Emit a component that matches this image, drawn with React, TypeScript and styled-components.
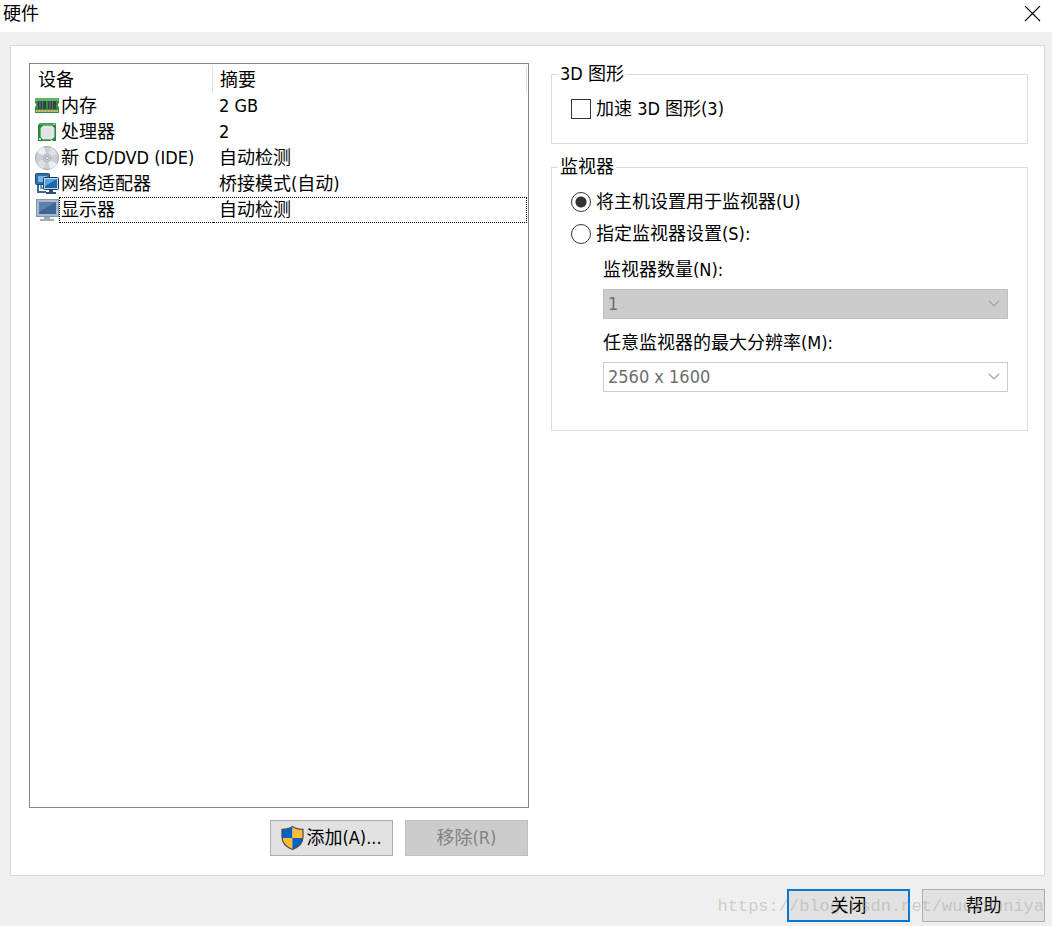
import React from "react";
import styled, { createGlobalStyle, css } from "styled-components";

const Global = createGlobalStyle`
  *, *::before, *::after { box-sizing: border-box; }
  body { margin: 0; background: #efefef; }
  body, button, input, select {
    font-family: "DejaVu Sans Condensed", "Noto Sans CJK SC", sans-serif;
    font-size: 18px;
    line-height: 26px;
    color: #000;
  }
`;

const Dialog = styled.div`
  min-height: 100vh;
  display: flex;
  flex-direction: column;
  background: #efefef;
`;

const TitleBar = styled.header`
  height: 32px;
  flex: none;
  display: flex;
  align-items: center;
  justify-content: space-between;
  padding: 0 11px 4px 3px;
  background: #fff;
`;

const Title = styled.h1`
  margin: 0;
  font-size: 18px;
  font-weight: 400;
`;

const CloseIconButton = styled.button`
  display: flex;
  padding: 0;
  border: 0;
  background: none;
`;

const Panel = styled.main`
  flex: 1;
  display: flex;
  gap: 22px;
  margin: 13px 7px 0 10px;
  padding: 17px 16px 19px 18px;
  border: 1px solid #d9d9d9;
  background: #fff;
`;

const DeviceColumn = styled.section`
  flex: 500 1 0;
  min-width: 0;
  display: flex;
  flex-direction: column;
  gap: 12px;
`;

const SettingsColumn = styled.section`
  flex: 477 1 0;
  min-width: 0;
`;

const DeviceBox = styled.div`
  flex: 1;
  border: 1px solid #828790;
  padding: 2px 1px;
`;

const DeviceTable = styled.table`
  width: 100%;
  border-collapse: separate;
  border-spacing: 0;
  table-layout: fixed;
`;

const HeadCell = styled.th<{ $width?: string }>`
  width: ${(p) => p.$width ?? "auto"};
  height: 27px;
  padding: 0 7px;
  border-right: 1px solid #e0e0e0;
  text-align: left;
  font-weight: 400;
`;

const Cell = styled.td`
  height: 26px;
  padding: 0;
  white-space: nowrap;
`;

const Device = styled.div`
  display: flex;
  height: 26px;
  padding-left: 4px;
`;

const DeviceName = styled.span<{ $focused?: boolean }>`
  flex: 1;
  padding-left: 2px;
  ${(p) => p.$focused && css`border: 1px dotted #000; border-right: 0; padding-left: 1px; line-height: 24px;`}
`;

const Summary = styled.div<{ $focused?: boolean }>`
  height: 26px;
  padding-left: 6px;
  ${(p) => p.$focused && css`border: 1px dotted #000; border-left: 0; line-height: 24px;`}
`;

const ListActions = styled.div`
  display: flex;
  justify-content: flex-end;
  gap: 12px;
  padding-right: 1px;
`;

const PushButton = styled.button<{ $height: number; $primary?: boolean }>`
  width: 123px;
  height: ${(p) => p.$height}px;
  display: flex;
  align-items: center;
  justify-content: center;
  gap: 2px;
  padding: 0;
  background: #e1e1e1;
  border: ${(p) => (p.$primary ? "2px solid #0078d7" : "1px solid #adadad")};
  white-space: nowrap;
  &:disabled {
    background: #ccc;
    border-color: #bfbfbf;
    color: #838383;
  }
`;

const Group = styled.fieldset<{ $height: number }>`
  min-width: 0;
  min-height: ${(p) => p.$height}px;
  margin: 0 0 12px;
  padding: 8px 19px 0;
  border: 1px solid #dcdcdc;
  legend {
    margin-left: -13px;
    padding: 0 2px;
    line-height: 22px;
  }
`;

const Choice = styled.label`
  display: flex;
  align-items: center;
  gap: 5px;
  height: 32px;
`;

const Mark = styled.input`
  appearance: none;
  width: 20px;
  height: 20px;
  margin: 0;
  border: 1px solid #333;
  background: #fff;
  &[type="radio"] { border-radius: 50%; }
  &[type="radio"]:checked {
    background: radial-gradient(circle, #333 0 5px, #fff 6px);
  }
`;

const Field = styled.div`
  display: flex;
  flex-direction: column;
  gap: 6px;
  margin: 7px 0 11px 32px;
`;

const SelectWrap = styled.div`
  display: grid;
  align-items: center;
  > * { grid-area: 1 / 1; }
  > svg { justify-self: end; margin-right: 8px; pointer-events: none; }
`;

const Select = styled.select<{ $filled?: boolean }>`
  appearance: none;
  width: 100%;
  height: 30px;
  padding: 0 4px;
  border: 1px solid ${(p) => (p.$filled ? "#bfbfbf" : "#ccc")};
  border-radius: 0;
  background: ${(p) => (p.$filled ? "#ccc" : "#fff")};
  color: #6d6d6d;
  opacity: 1;
`;

const Footer = styled.footer`
  position: relative;
  flex: none;
  height: 50px;
  display: flex;
  justify-content: flex-end;
  gap: 12px;
  padding: 13px 7px 0;
`;

const Watermark = styled.span`
  position: absolute;
  right: 8px;
  top: 18px;
  font-family: "Liberation Mono", monospace;
  font-size: 17px;
  color: rgba(150, 150, 140, 0.4);
  pointer-events: none;
`;

const MemoryIcon = () => (
  <svg width="24" height="26" viewBox="0 0 24 26" aria-hidden="true">
    <path d="M0 5h24v5l-1 1v2l1 1v6H0v-6l1-1v-2l-1-1z" fill="#2f8f3f" />
    <path d="M0 5h24v3H0z" fill="#5cb864" />
    <path d="M3 8h4v8H3zM8 8h3v8H8zM13 8h4v8h-4zM18 8h3v8h-3z" fill="#3b3f47" />
    <path d="M5 8v8M15 8v8" stroke="#686c76" />
    <path d="M1 17h22v2H1z" fill="#e2c477" />
    <path d="M3 17v2M6 17v2M9 17v2M12 17v2M15 17v2M18 17v2M21 17v2" stroke="#66954b" />
  </svg>
);

const CpuIcon = () => (
  <svg width="24" height="26" viewBox="0 0 24 26" aria-hidden="true">
    <path d="M5 4h16v18h-3l-1-1-2 1H3V6z" fill="#258b3b" />
    <path d="M5 4h16v2H4z" fill="#48a857" />
    <path d="M8 7h9l2 2v9l-2 2H8l-2-2V9z" fill="#ebebeb" stroke="#c9dacb" />
    <path d="M7 9h10v9H7z" fill="#e1e2e2" />
    <path d="M4 19h2v2H4zM18 5h2v1h-2z" fill="#b8e5b5" />
  </svg>
);

const DiscIcon = () => (
  <svg width="24" height="26" viewBox="0 0 24 26" aria-hidden="true">
    <circle cx="12" cy="13" r="11.500" fill="#cbcfd4" stroke="#a4a9b0" />
    <path d="M12 13 2 7a11 11 0 0 1 7-5zM12 13l10 6a11 11 0 0 1-7 5z" fill="#eceff1" />
    <path d="M12 13 16 2a11 11 0 0 1 6 7zM12 13 8 24a11 11 0 0 1-6-7z" fill="#dce0e4" />
    <circle cx="12" cy="13" r="4" fill="#c4cad2" stroke="#b2b8c0" />
    <circle cx="12" cy="13" r="1.500" fill="#fff" stroke="#9aa2ac" />
  </svg>
);

const NetworkIcon = () => (
  <svg width="24" height="26" viewBox="0 0 24 26" aria-hidden="true">
    <path d="M3 13v8h8" fill="none" stroke="#3c6a93" strokeWidth="2" />
    <path d="M6 13v4h4" fill="none" stroke="#7c97ae" strokeWidth="2" />
    <rect x="0.500" y="2.500" width="14" height="11" rx="1" fill="#2f6ea6" stroke="#1c4c7a" />
    <path d="M3 5h9v6H3z" fill="#79b5e6" />
    <rect x="8.500" y="6.500" width="15" height="12" rx="1" fill="#c5d8e8" stroke="#173f66" />
    <path d="M10 8h12v9H10z" fill="#1e66ab" />
    <path d="M10 8h12L10 15z" fill="#58a3dd" />
    <path d="M14 19h4v2h3v2H11v-2h3z" fill="#294f73" />
  </svg>
);

const DisplayIcon = () => (
  <svg width="24" height="26" viewBox="0 0 24 26" aria-hidden="true">
    <rect x="1.500" y="2.500" width="22" height="17" fill="#a9bacd" stroke="#8496aa" />
    <path d="M4 5h17v12H4z" fill="#3f6596" />
    <path d="M4 5h17L4 15z" fill="#5c81ae" />
    <path d="M9 20h6v2h4v2H5v-2h4z" fill="#9dacbc" />
  </svg>
);

const ShieldIcon = () => (
  <svg width="23" height="26" viewBox="0 0 23 26" aria-hidden="true">
    <path d="M11.500 1.500C8.500 3.600 5 4.300 1 4.300V12c0 6 4.500 10 10.500 12.500z" fill="#0063c5" />
    <path d="M11.500 1.500c3 2.100 6.500 2.800 10.500 2.800V12c0 6-4.500 10-10.500 12.500z" fill="#ffbc35" />
    <path d="M1 13h10.500v11.500C5.500 22 1.300 18.500 1 13z" fill="#ffbc35" />
    <path d="M22 13H11.500v11.500C17.500 22 21.700 18.500 22 13z" fill="#0063c5" />
    <path d="M11.500 1.500c3 2.100 6.500 2.800 10.500 2.800V12c0 6-4.500 10-10.500 12.500C5.500 22 1 18 1 12V4.300c4 0 7.500-.7 10.500-2.800z" fill="none" stroke="#4d5358" strokeWidth="1.300" />
  </svg>
);

const Chevron = () => (
  <svg width="12" height="8" viewBox="0 0 12 8" aria-hidden="true">
    <path d="m1 1 5 5 5-5" fill="none" stroke="#a0a0a0" strokeWidth="1.200" />
  </svg>
);

const devices = [
  { name: "内存", summary: "2 GB", Icon: MemoryIcon },
  { name: "处理器", summary: "2", Icon: CpuIcon },
  { name: "新 CD/DVD (IDE)", summary: "自动检测", Icon: DiscIcon },
  { name: "网络适配器", summary: "桥接模式(自动)", Icon: NetworkIcon },
  { name: "显示器", summary: "自动检测", Icon: DisplayIcon, focused: true },
];

export default function App() {
  return (
    <Dialog>
      <Global />
      <TitleBar>
        <Title>硬件</Title>
        <CloseIconButton type="button" aria-label="关闭窗口">
          <svg width="17" height="17" viewBox="0 0 17 17" aria-hidden="true">
            <path d="m1 0 15 15M16 0 1 15" stroke="#000" strokeWidth="1.100" />
          </svg>
        </CloseIconButton>
      </TitleBar>
      <Panel>
        <DeviceColumn>
          <DeviceBox>
            <DeviceTable>
              <thead>
                <tr>
                  <HeadCell $width="182px">设备</HeadCell>
                  <HeadCell>摘要</HeadCell>
                </tr>
              </thead>
              <tbody>
                {devices.map(({ name, summary, Icon, focused }) => (
                  <tr key={name}>
                    <Cell>
                      <Device>
                        <Icon />
                        <DeviceName $focused={focused}>{name}</DeviceName>
                      </Device>
                    </Cell>
                    <Cell>
                      <Summary $focused={focused}>{summary}</Summary>
                    </Cell>
                  </tr>
                ))}
              </tbody>
            </DeviceTable>
          </DeviceBox>
          <ListActions>
            <PushButton type="button" $height={36}>
              <ShieldIcon />
              添加(A)...
            </PushButton>
            <PushButton type="button" $height={36} disabled>移除(R)</PushButton>
          </ListActions>
        </DeviceColumn>
        <SettingsColumn>
          <Group $height={81}>
            <legend>3D 图形</legend>
            <Choice>
              <Mark type="checkbox" />
              加速 3D 图形(3)
            </Choice>
          </Group>
          <Group $height={275}>
            <legend>监视器</legend>
            <Choice>
              <Mark type="radio" name="monitor" defaultChecked />
              将主机设置用于监视器(U)
            </Choice>
            <Choice>
              <Mark type="radio" name="monitor" />
              指定监视器设置(S):
            </Choice>
            <Field>
              <label htmlFor="count">监视器数量(N):</label>
              <SelectWrap>
                <Select id="count" disabled $filled>
                  <option>1</option>
                </Select>
                <Chevron />
              </SelectWrap>
            </Field>
            <Field>
              <label htmlFor="resolution">任意监视器的最大分辨率(M):</label>
              <SelectWrap>
                <Select id="resolution" disabled>
                  <option>2560 x 1600</option>
                </Select>
                <Chevron />
              </SelectWrap>
            </Field>
          </Group>
        </SettingsColumn>
      </Panel>
      <Footer>
        <PushButton type="button" $height={33} $primary>关闭</PushButton>
        <PushButton type="button" $height={33}>帮助</PushButton>
        <Watermark>https://blog.csdn.net/wudinuniya</Watermark>
      </Footer>
    </Dialog>
  );
}
